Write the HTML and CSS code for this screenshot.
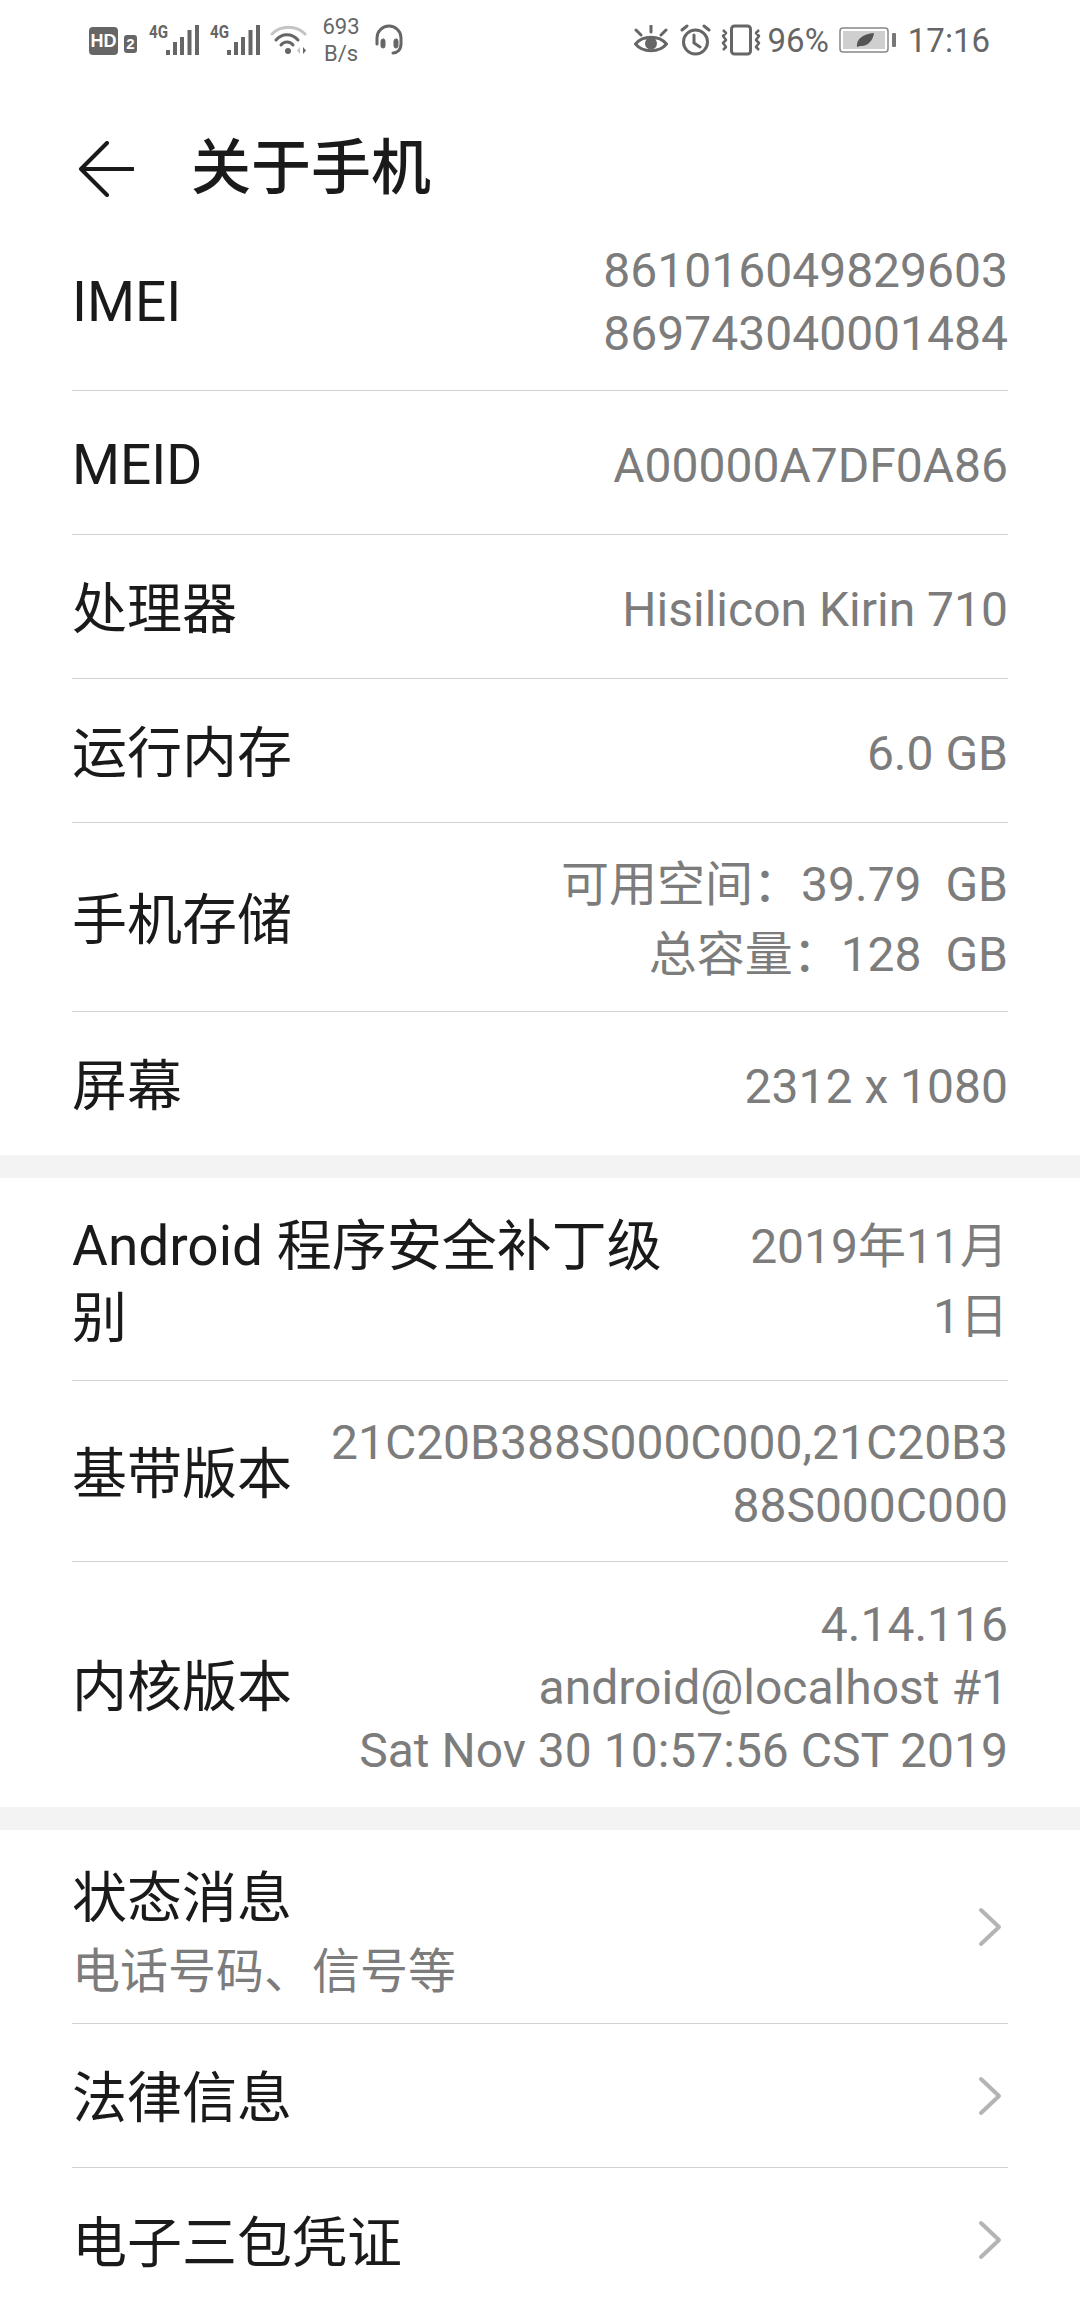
FILE: index.html
```html
<!DOCTYPE html>
<html lang="zh-CN">
<head>
    <meta charset="UTF-8">
    <title>关于手机</title>
    <link rel="stylesheet" href="styles.css">
</head>
<body>
    <div class="status-bar">
        <div class="status-left">
            <svg class="ic-hd" viewBox="0 0 48 30" width="48" height="30">
                <rect x="0" y="2" width="29" height="28" rx="4" fill="#666"/>
                <text x="14.5" y="22" class="hd-text">HD</text>
                <rect x="35" y="10" width="13" height="18" rx="3" fill="#666"/>
                <text x="41.5" y="24" class="hd-small">2</text>
            </svg>
            <svg class="ic-signal" viewBox="0 -4 50 36" width="50" height="36">
                <text x="0" y="14" textLength="19" lengthAdjust="spacingAndGlyphs" class="sig-text">4G</text>
                <rect x="17" y="26" width="4" height="5" fill="#666"/>
                <rect x="24" y="18" width="4" height="13" fill="#666"/>
                <rect x="31" y="13" width="4" height="18" fill="#666"/>
                <rect x="38.500" y="6" width="4" height="25" fill="#666"/>
                <rect x="46" y="1" width="4" height="30" fill="#666"/>
            </svg>
            <svg class="ic-signal" viewBox="0 -4 50 36" width="50" height="36">
                <text x="0" y="14" textLength="19" lengthAdjust="spacingAndGlyphs" class="sig-text">4G</text>
                <rect x="17" y="26" width="4" height="5" fill="#666"/>
                <rect x="24" y="18" width="4" height="13" fill="#666"/>
                <rect x="31" y="13" width="4" height="18" fill="#666"/>
                <rect x="38.500" y="6" width="4" height="25" fill="#666"/>
                <rect x="46" y="1" width="4" height="30" fill="#666"/>
            </svg>
            <svg class="ic-wifi" viewBox="0 0 37 30" width="37" height="30" fill="none" stroke-linecap="round">
                <path d="M2 9C11 0 26 0 35 9" stroke="#c4c4c4" stroke-width="3"/>
                <path d="M6 15C12 8 22 8 28 15" stroke="#666" stroke-width="3"/>
                <path d="M11 20C14 16 20 16 23 20" stroke="#666" stroke-width="3"/>
                <circle cx="18" cy="26" r="3" fill="#666"/>
                <path d="M30 22v7l-3-3.500z" fill="#c4c4c4"/>
                <path d="M33 22v7l3-3.500z" fill="#666"/>
            </svg>
            <div class="net-speed"><span>693</span><span>B/s</span></div>
            <svg class="ic-headset" viewBox="0 0 28 32" width="28" height="32" fill="none" stroke="#666" stroke-width="3" stroke-linecap="round">
                <path d="M2 20V14a12 12 0 0 1 24 0v6c0 6-4 9-8 9"/>
                <rect x="6" y="15" width="4" height="9" rx="2" fill="#666" stroke-width="1"/>
                <rect x="19" y="15" width="4" height="9" rx="2" fill="#666" stroke-width="1"/>
            </svg>
        </div>
        <div class="status-right">
            <svg class="ic-eye" viewBox="0 0 34 30" width="34" height="30" fill="none" stroke="#666" stroke-width="3" stroke-linecap="round">
                <path d="M1.500 19C9 10 25 10 32.500 19C25 28 9 28 1.500 19Z"/>
                <circle cx="17" cy="18.500" r="6" fill="#666" stroke="none"/>
                <path d="M2 5l5 5M17 1v6M32 5l-5 5"/>
            </svg>
            <svg class="ic-alarm" viewBox="0 0 31 32" width="31" height="32" fill="none" stroke="#666" stroke-width="3" stroke-linecap="round">
                <circle cx="15.500" cy="18" r="12"/>
                <path d="M14 11v8l6 4M2 6l5-4M29 6l-5-4"/>
            </svg>
            <svg class="ic-vibrate" viewBox="0 0 40 32" width="40" height="32" fill="none" stroke="#666" stroke-width="3" stroke-linejoin="round">
                <rect x="10.500" y="2" width="19" height="28" rx="3"/>
                <path d="M2 6l3 3-3 3 3 4-3 3 3 4-3 3M38 6l-3 3 3 3-3 4 3 3-3 4 3 3" stroke-width="2.500"/>
            </svg>
            <span class="battery-pct">96%</span>
            <svg class="ic-battery" viewBox="0 0 58 28" width="58" height="28">
                <rect x="1" y="2" width="48" height="24" rx="3" fill="#fff" stroke="#888" stroke-width="1.500"/>
                <rect x="4" y="5" width="42" height="18" fill="#cfcfcf"/>
                <rect x="53" y="7" width="4" height="14" rx="1" fill="#777"/>
                <path d="M18 21C17 13 24 8 35 7C34 15 28 21 21 20Z" fill="#555"/>
            </svg>
            <span class="clock">17:16</span>
        </div>
    </div>

    <div class="title-bar">
        <svg class="back-icon" viewBox="0 0 56 56" width="56" height="56" fill="none" stroke="#1a1a1a" stroke-width="4" stroke-linecap="round" stroke-linejoin="round">
            <path d="M29 2L3 28l26 26M3 28h52"/>
        </svg>
        <h1 class="title">关于手机</h1>
    </div>

    <div class="group">
        <div class="row row-imei">
            <div class="row-name">IMEI</div>
            <div class="row-value">861016049829603<br>869743040001484</div>
        </div>
        <div class="row row-short">
            <div class="row-name">MEID</div>
            <div class="row-value">A00000A7DF0A86</div>
        </div>
        <div class="row row-short">
            <div class="row-name">处理器</div>
            <div class="row-value">Hisilicon Kirin 710</div>
        </div>
        <div class="row row-short">
            <div class="row-name">运行内存</div>
            <div class="row-value">6.0 GB</div>
        </div>
        <div class="row row-storage">
            <div class="row-name">手机存储</div>
            <div class="row-value value-tall">可用空间：39.79&nbsp; GB<br>总容量：128&nbsp; GB</div>
        </div>
        <div class="row row-last">
            <div class="row-name">屏幕</div>
            <div class="row-value">2312 x 1080</div>
        </div>
    </div>

    <div class="group-gap"></div>

    <div class="group">
        <div class="row row-android">
            <div class="row-name name-wide">Android 程序安全补丁级别</div>
            <div class="row-value value-tall">2019年11月<br>1日</div>
        </div>
        <div class="row row-baseband">
            <div class="row-name">基带版本</div>
            <div class="row-value">21C20B388S000C000,21C20B3<br>88S000C000</div>
        </div>
        <div class="row row-kernel">
            <div class="row-name">内核版本</div>
            <div class="row-value">4.14.116<br>android@localhost #1<br>Sat Nov 30 10:57:56 CST 2019</div>
        </div>
    </div>

    <div class="group-gap"></div>

    <div class="group">
        <div class="row row-status">
            <div>
                <div class="row-name">状态消息</div>
                <div class="row-sub">电话号码、信号等</div>
            </div>
            <svg class="chevron chevron-status" viewBox="0 0 24 40" width="24" height="40"><path d="M3 3l18 17L3 37"/></svg>
        </div>
        <div class="row row-link">
            <div class="row-name">法律信息</div>
            <svg class="chevron" viewBox="0 0 24 40" width="24" height="40"><path d="M3 3l18 17L3 37"/></svg>
        </div>
        <div class="row row-link row-end">
            <div class="row-name">电子三包凭证</div>
            <svg class="chevron" viewBox="0 0 24 40" width="24" height="40"><path d="M3 3l18 17L3 37"/></svg>
        </div>
    </div>
</body>
</html>
```

FILE: styles.css
```css
html, body {
    margin: 0;
    padding: 0;
    background: #fff;
}
body {
    width: 1080px;
    height: 2312px;
    overflow: hidden;
    font-family: "Roboto", "Noto Sans CJK SC", sans-serif;
    color: #1a1a1a;
}
.status-bar {
    height: 80px;
    display: flex;
    justify-content: space-between;
    align-items: center;
    padding: 0 90px 0 89px;
    color: #666;
}
.status-left, .status-right {
    display: flex;
    align-items: center;
}
.ic-hd {
    margin-right: 12px;
}
.ic-signal {
    margin: 0 11px 4px 0;
}
.ic-wifi {
    margin: 0 15px 0 -1px;
}
.net-speed {
    display: flex;
    flex-direction: column;
    align-items: center;
    width: 38px;
    font-size: 22px;
    line-height: 27px;
    margin-right: 15px;
}
.hd-text {
    font-family: "Liberation Sans", sans-serif;
    font-size: 18px;
    font-weight: bold;
    fill: #fff;
    text-anchor: middle;
}
.hd-small {
    font-family: "Liberation Sans", sans-serif;
    font-size: 15px;
    font-weight: bold;
    fill: #fff;
    text-anchor: middle;
}
.sig-text {
    font-family: "Roboto", sans-serif;
    font-size: 19px;
    font-weight: bold;
    fill: #666;
}
.ic-eye {
    margin-right: 12px;
}
.ic-alarm {
    margin-right: 10px;
}
.ic-vibrate {
    margin-right: 7px;
}
.ic-battery {
    margin: 0 11px 0 10px;
}
.battery-pct, .clock {
    font-size: 33px;
    line-height: 40px;
    margin-top: 2px;
}
.title-bar {
    height: 133px;
    box-sizing: border-box;
    padding: 44px 0 0 78px;
    display: flex;
    align-items: center;
}
.back-icon {
    flex: none;
}
.title {
    margin: 0 0 0 57px;
    font-size: 60px;
    font-weight: 500;
    line-height: 88px;
}
.group {
    padding: 0 72px;
}
.group-gap {
    height: 23px;
    background: #f3f3f3;
}
.row {
    display: flex;
    justify-content: space-between;
    align-items: center;
    padding-top: 5px;
    border-bottom: 1px solid #d2d2d2;
    box-sizing: border-box;
}
.row-imei { height: 178px; padding-top: 1px; }
.row-short { height: 144px; }
.row-storage { height: 189px; }
.row-last { height: 143px; border-bottom: none; }
.row-android { height: 203px; }
.row-baseband { height: 181px; }
.row-kernel { height: 245px; border-bottom: none; }
.row-status { height: 194px; padding-top: 12px; }
.row-link { height: 144px; }
.row-end { border-bottom: none; }
.row-name {
    font-size: 55px;
    line-height: 72px;
    white-space: nowrap;
}
.name-wide {
    width: 620px;
    white-space: normal;
}
.row-value {
    font-size: 48px;
    line-height: 63px;
    color: #7c7c7c;
    text-align: right;
    white-space: nowrap;
}
.value-tall {
    line-height: 70px;
}
.row-sub {
    font-size: 48px;
    line-height: 64px;
    margin-top: 6px;
    color: #7c7c7c;
}
.chevron {
    fill: none;
    stroke: #b4b4b4;
    stroke-width: 4;
    stroke-linecap: round;
    stroke-linejoin: round;
    margin: -5px 6px 0 0;
}
.chevron-status {
    margin-top: -12px;
}
```
